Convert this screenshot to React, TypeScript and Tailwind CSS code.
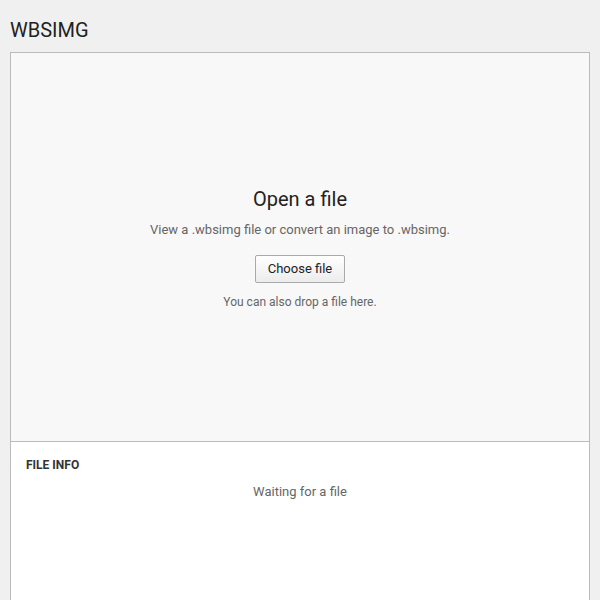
export default function App() {
  return (
    <div
      className="min-h-screen bg-[#f0f0f0] px-[10px] text-[#222]"
      style={{ fontFamily: "Roboto, 'Noto Sans', sans-serif" }}
    >
      <header className="h-[52px] flex items-center">
        <h1 className="text-[20px] leading-[28px] pt-[7px] font-normal">WBSIMG</h1>
      </header>
      <div className="border border-[#bbb] bg-white">
        <section className="h-[389px] bg-[#f8f8f8] border-b border-[#bbb] flex flex-col items-center justify-center text-center">
          <h2 className="text-[20px] leading-[28px] text-[#222]">Open a file</h2>
          <p className="mt-[8px] text-[13px] leading-[18px] text-[#666]">
            View a .wbsimg file or convert an image to .wbsimg.
          </p>
          <button className="mt-[16px] h-[28px] w-[90px] rounded-[2px] border border-[#aaa] bg-gradient-to-b from-white to-[#ececec] text-[13px] text-[#222]">
            Choose file
          </button>
          <p className="mt-[11px] text-[12px] leading-[16px] text-[#666]">You can also drop a file here.</p>
        </section>
        <section className="h-[200px] px-[15px] pt-[15px]">
          <h3 className="text-[12px] leading-[16px] font-bold text-[#333]">FILE INFO</h3>
          <p className="mt-[10px] text-center text-[13px] leading-[18px] text-[#666]">Waiting for a file</p>
        </section>
      </div>
    </div>
  );
}
